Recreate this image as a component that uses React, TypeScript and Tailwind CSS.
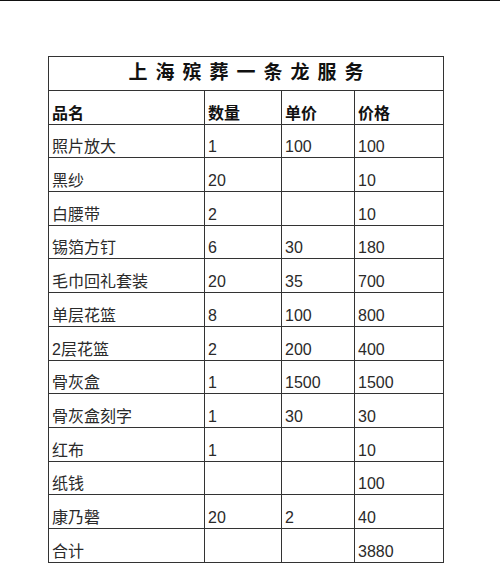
const rows: [string, string, string, string][] = [
  ["照片放大", "1", "100", "100"],
  ["黑纱", "20", "", "10"],
  ["白腰带", "2", "", "10"],
  ["锡箔方钉", "6", "30", "180"],
  ["毛巾回礼套装", "20", "35", "700"],
  ["单层花篮", "8", "100", "800"],
  ["2层花篮", "2", "200", "400"],
  ["骨灰盒", "1", "1500", "1500"],
  ["骨灰盒刻字", "1", "30", "30"],
  ["红布", "1", "", "10"],
  ["纸钱", "", "", "100"],
  ["康乃磬", "20", "2", "40"],
  ["合计", "", "", "3880"],
];

const font = { fontFamily: '"Liberation Sans", "Noto Sans CJK SC", sans-serif' };

export default function App() {
  return (
    <div className="w-[500px] h-[588px] bg-white overflow-hidden" style={font}>
      <div className="border-t border-[#111] pt-[55px] pl-[48px]">
        <table className="table-fixed border-collapse w-[395px] text-[#222]">
          <colgroup>
            <col className="w-[156px]" />
            <col className="w-[77px]" />
            <col className="w-[73px]" />
            <col className="w-[89px]" />
          </colgroup>
          <thead>
            <tr className="h-[34px]">
              <th
                colSpan={4}
                className="border-[1.5px] border-[#333] text-[19px] font-bold tracking-[8px] pl-[8px] text-center align-middle text-[#111]"
              >
                上海殡葬一条龙服务
              </th>
            </tr>
            <tr className="h-[33.7px]">
              {["品名", "数量", "单价", "价格"].map((h) => (
                <th
                  key={h}
                  className="border-[1.5px] border-[#333] text-left align-bottom px-[3px] pb-0 text-[16px] font-bold leading-[20px] text-[#111]"
                >
                  {h}
                </th>
              ))}
            </tr>
          </thead>
          <tbody>
            {rows.map((r, i) => (
              <tr key={i} className="h-[33.7px]">
                {r.map((c, j) => (
                  <td
                    key={j}
                    className="border-[1.5px] border-[#333] align-bottom px-[3px] pb-0 text-[16px] leading-[20px] text-[#2a2a2a]"
                  >
                    {c}
                  </td>
                ))}
              </tr>
            ))}
          </tbody>
        </table>
      </div>
    </div>
  );
}
